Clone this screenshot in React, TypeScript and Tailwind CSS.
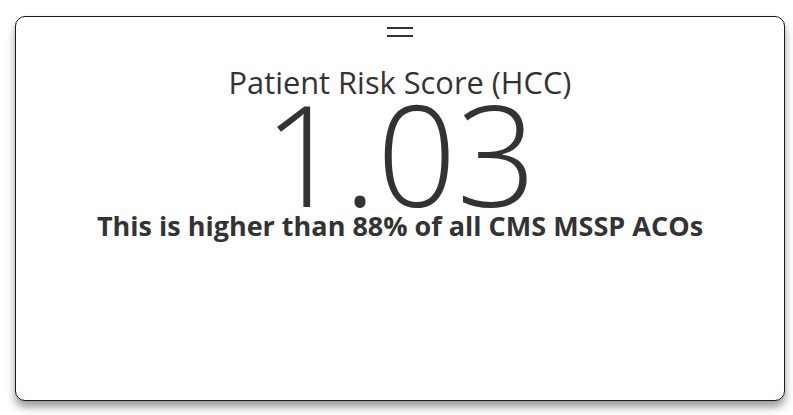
export default function App() {
  return (
    <div className="min-h-[415px] bg-white pt-4 pl-[15px] pr-2 font-['Open_Sans',sans-serif] text-[#333333]">
      <div className="flex h-[385px] w-[770px] flex-col items-center rounded-[10px] border border-[#1a1a1a] bg-white shadow-[0_6px_8px_rgba(0,0,0,0.4)]">
        {/* drag handle */}
        <div className="mt-[10px] flex flex-col gap-[6px]">
          <div className="h-[2px] w-[26px] bg-[#333333]" />
          <div className="h-[2px] w-[26px] bg-[#333333]" />
        </div>
        <h2 className="mt-[30px] text-[30.8px] leading-none font-normal">Patient Risk Score (HCC)</h2>
        <div className="text-[140px] leading-[110px] font-light">1.03</div>
        <p className="mt-[4px] text-[27px] leading-none font-bold">This is higher than 88% of all CMS MSSP ACOs</p>
      </div>
    </div>
  );
}
